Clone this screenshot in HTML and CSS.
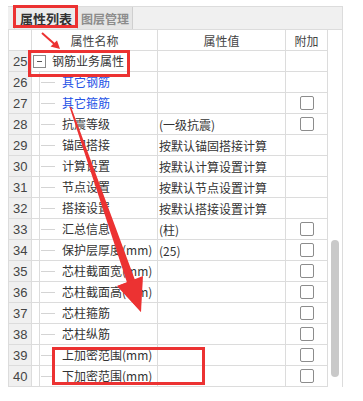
FILE: index.html
```html
<!DOCTYPE html>
<html lang="zh-CN">
<head>
    <meta charset="UTF-8">
    <title>属性列表</title>
    <link rel="stylesheet" href="styles.css">
</head>
<body>
    <div class="panel">
        <!-- tabs -->
        <div class="tabs">
            <div class="tab active">属性列表</div>
            <div class="tab">图层管理</div>
        </div>

        <!-- property grid -->
        <div class="grid">
            <div class="cell num head"></div>
            <div class="cell head">属性名称</div>
            <div class="cell head">属性值</div>
            <div class="cell head">附加</div>
            <div class="scroll"><div class="thumb"></div></div>

            <div class="cell num">25</div>
            <div class="cell name group"><span class="toggle"></span>钢筋业务属性</div>
            <div class="cell"></div>
            <div class="cell"></div>

            <div class="cell num">26</div>
            <div class="cell name link"><span class="guide"></span>其它钢筋</div>
            <div class="cell"></div>
            <div class="cell"></div>

            <div class="cell num">27</div>
            <div class="cell name link"><span class="guide"></span>其它箍筋</div>
            <div class="cell"></div>
            <div class="cell check"><span class="box"></span></div>

            <div class="cell num">28</div>
            <div class="cell name"><span class="guide"></span>抗震等级</div>
            <div class="cell value">(一级抗震)</div>
            <div class="cell check"><span class="box"></span></div>

            <div class="cell num">29</div>
            <div class="cell name"><span class="guide"></span>锚固搭接</div>
            <div class="cell value">按默认锚固搭接计算</div>
            <div class="cell"></div>

            <div class="cell num">30</div>
            <div class="cell name"><span class="guide"></span>计算设置</div>
            <div class="cell value">按默认计算设置计算</div>
            <div class="cell"></div>

            <div class="cell num">31</div>
            <div class="cell name"><span class="guide"></span>节点设置</div>
            <div class="cell value">按默认节点设置计算</div>
            <div class="cell"></div>

            <div class="cell num">32</div>
            <div class="cell name"><span class="guide"></span>搭接设置</div>
            <div class="cell value">按默认搭接设置计算</div>
            <div class="cell"></div>

            <div class="cell num">33</div>
            <div class="cell name"><span class="guide"></span>汇总信息</div>
            <div class="cell value">(柱)</div>
            <div class="cell check"><span class="box"></span></div>

            <div class="cell num">34</div>
            <div class="cell name"><span class="guide"></span>保护层厚度(mm)</div>
            <div class="cell value">(25)</div>
            <div class="cell check"><span class="box"></span></div>

            <div class="cell num">35</div>
            <div class="cell name"><span class="guide"></span>芯柱截面宽(mm)</div>
            <div class="cell"></div>
            <div class="cell check"><span class="box"></span></div>

            <div class="cell num">36</div>
            <div class="cell name"><span class="guide"></span>芯柱截面高(mm)</div>
            <div class="cell"></div>
            <div class="cell check"><span class="box"></span></div>

            <div class="cell num">37</div>
            <div class="cell name"><span class="guide"></span>芯柱箍筋</div>
            <div class="cell"></div>
            <div class="cell check"><span class="box"></span></div>

            <div class="cell num">38</div>
            <div class="cell name"><span class="guide"></span>芯柱纵筋</div>
            <div class="cell"></div>
            <div class="cell check"><span class="box"></span></div>

            <div class="cell num">39</div>
            <div class="cell name"><span class="guide"></span>上加密范围(mm)</div>
            <div class="cell"></div>
            <div class="cell check"><span class="box"></span></div>

            <div class="cell num">40</div>
            <div class="cell name"><span class="guide"></span>下加密范围(mm)</div>
            <div class="cell"></div>
            <div class="cell check"><span class="box"></span></div>
        </div>
    </div>

    <!-- red annotations drawn over the screenshot -->
    <svg class="marks" width="363" height="401" viewBox="0 0 363 401">
        <g fill="none" stroke="#ec3232" stroke-width="3">
            <rect x="14.5" y="6.5" width="62" height="20"/>
            <rect x="29.5" y="51.5" width="99" height="24"/>
            <rect x="53.5" y="348.5" width="150" height="35"/>
        </g>
        <line x1="42" y1="33" x2="55" y2="44.5" stroke="#ec3232" stroke-width="2"/>
        <polygon points="60,49 57,40.5 50.5,46.5" fill="#ec3232"/>
        <polygon points="69.5,107 71,106.8 135,280 141,312 117.5,286 127,282.6" fill="#ec3232"/>
        <polygon points="141,312 143,276 117,286" fill="#ec3232"/>
    </svg>
</body>
</html>
```

FILE: styles.css
```css
body {
    margin: 0;
    background: #ffffff;
    font-family: "Noto Sans CJK SC", "Noto Sans", sans-serif;
    font-size: 12px;
    color: #333333;
}

.panel {
    margin: 6px 0 0 8px;
    width: 335px;
}

/* tabs */
.tabs {
    display: flex;
    height: 22px;
    padding-left: 6px;
    background-color: #f0f0f0;
    border: 1px solid #dcdcdc;
    border-left: none;
}

.tab {
    display: flex;
    align-items: center;
    padding: 0 3px;
    color: #8c8c8c;
    font-size: 12px;
    font-weight: bold;
    background-color: #e6e6e6;
    border-right: 1px solid #cfcfcf;
}

.tab.active {
    width: 62px;
    justify-content: center;
    padding: 0;
    color: #333333;
    font-size: 13px;
    background-color: #ececec;
    border-left: 1px solid #d8d8d8;
}

/* property grid */
.grid {
    display: grid;
    grid-template-columns: 23px 126px 128px 42px 15px;
    grid-auto-rows: 21px;
    border-left: 1px solid #dcdcdc;
}

.cell {
    display: flex;
    align-items: center;
    overflow: hidden;
    white-space: nowrap;
    border-right: 1px solid #dcdcdc;
    border-bottom: 1px solid #dcdcdc;
}

.head {
    justify-content: center;
    color: #444444;
}

.num {
    padding-left: 4px;
    font-family: "Liberation Sans", "Noto Sans", sans-serif;
    font-size: 13px;
    color: #444444;
    background-color: #f0f0f0;
}

.num.head {
    background-color: #ffffff;
}

.name {
    align-items: stretch;
    line-height: 20px;
}

.guide {
    width: 16px;
    margin-left: 7px;
    margin-right: 6px;
    border-left: 1px solid #dcdcdc;
    background: linear-gradient(#d4d4d4, #d4d4d4) no-repeat 1px 50% / 14px 1px;
}

.link {
    color: #2552e6;
}

.group {
    align-items: center;
    font-size: 12px;
}

.toggle {
    position: relative;
    width: 11px;
    height: 11px;
    margin: 0 6px 0 1px;
    border: 1px solid #8a8a8a;
    background-color: #ffffff;
}

.toggle::after {
    content: "";
    position: absolute;
    left: 3px;
    top: 5px;
    width: 5px;
    height: 1px;
    background-color: #555555;
}

.value {
    padding-left: 1px;
}

.check {
    justify-content: center;
}

.box {
    width: 12px;
    height: 12px;
    border: 1px solid #8c8c8c;
    border-radius: 2px;
    background-color: #ffffff;
}

.scroll {
    grid-column: 5;
    grid-row: 1 / span 17;
    border-right: 1px solid #dcdcdc;
}

.thumb {
    width: 8px;
    height: 137px;
    margin: 210px 0 0 3px;
    border-radius: 4px;
    background-color: #c9c9c9;
}

.marks {
    position: absolute;
    left: 0;
    top: 0;
    pointer-events: none;
}
```
